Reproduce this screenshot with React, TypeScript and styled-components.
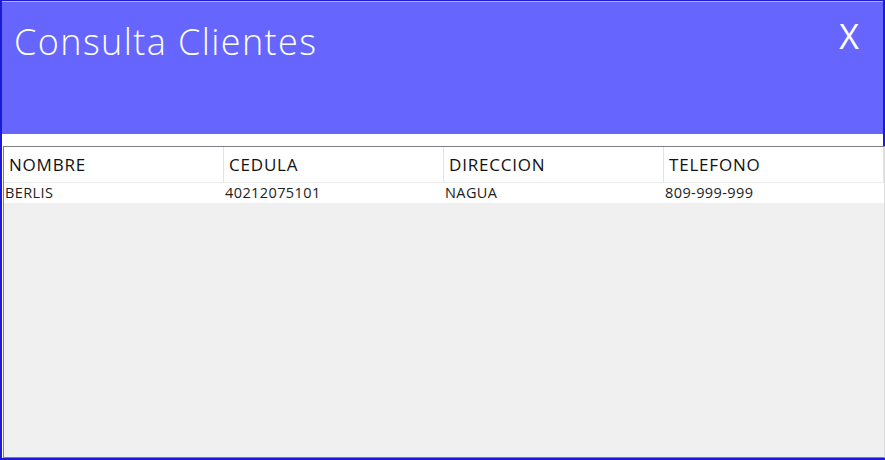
import React from "react";
import styled, { createGlobalStyle } from "styled-components";

const Global = createGlobalStyle`
  html, body { margin: 0; padding: 0; background: #ffffff; }
  * { box-sizing: border-box; }
`;

const Window = styled.div`
  width: 885px;
  height: 460px;
  display: flex;
  flex-direction: column;
  background: #ffffff;
  border-top: 1px solid #1a1ad8;
  border-left: 2px solid #1a1ad8;
  border-right: 2px solid #1a1ad8;
  border-bottom: 2px solid #1a1ad8;
`;

const Header = styled.div`
  height: 133px;
  flex: none;
  background: #6666ff;
  border-top: 1px solid #b8b8c8;
  display: flex;
  justify-content: space-between;
  align-items: flex-start;
  padding: 17px 24px 0 12px;
`;

const Title = styled.h1`
  margin: 0;
  font-family: "Open Sans", "DejaVu Sans", sans-serif;
  font-weight: 300;
  font-size: 36px;
  line-height: 46px;
  letter-spacing: 1.4px;
  color: #ffffff;
`;

const Close = styled.button`
  border: none;
  background: transparent;
  padding: 0;
  margin-top: -3px;
  font-family: "Open Sans", "DejaVu Sans", sans-serif;
  font-weight: 400;
  font-size: 34px;
  line-height: 40px;
  color: #ffffff;
  cursor: pointer;
`;

const Body = styled.div`
  flex: 1;
  display: flex;
  padding: 12px 1px 0 1px;
  background: #ffffff;
`;

const Grid = styled.div`
  flex: 1;
  display: flex;
  flex-direction: column;
  background: #f0f0f0;
  border: 1px solid #7c7f88;
  border-right-color: #dcdcdc;
`;

const Row = styled.div<{ $head?: boolean }>`
  display: grid;
  grid-template-columns: repeat(4, 220px);
  height: ${(p) => (p.$head ? "36px" : "20px")};
  background: #ffffff;
  border-bottom: 1px solid ${(p) => (p.$head ? "#ececec" : "transparent")};
`;

const HeadCell = styled.div`
  display: flex;
  align-items: center;
  padding-left: 5px;
  border-right: 1px solid #e3e3e3;
  font-family: "Open Sans", "DejaVu Sans", sans-serif;
  font-size: 17px;
  color: #111111;
  letter-spacing: 0.8px;
`;

const Cell = styled.div`
  display: flex;
  align-items: center;
  padding-left: 1px;
  font-family: "Open Sans", "DejaVu Sans", sans-serif;
  font-size: 14.5px;
  letter-spacing: 0.4px;
  color: #222222;
`;

const columns = ["NOMBRE", "CEDULA", "DIRECCION", "TELEFONO"];
const rows = [["BERLIS", "40212075101", "NAGUA", "809-999-999"]];

export default function App() {
  return (
    <>
      <Global />
      <Window>
        <Header>
          <Title>Consulta Clientes</Title>
          <Close>X</Close>
        </Header>
        <Body>
          <Grid>
            <Row $head>
              {columns.map((c) => (
                <HeadCell key={c}>{c}</HeadCell>
              ))}
            </Row>
            {rows.map((r, i) => (
              <Row key={i}>
                {r.map((v, j) => (
                  <Cell key={j}>{v}</Cell>
                ))}
              </Row>
            ))}
          </Grid>
        </Body>
      </Window>
    </>
  );
}
